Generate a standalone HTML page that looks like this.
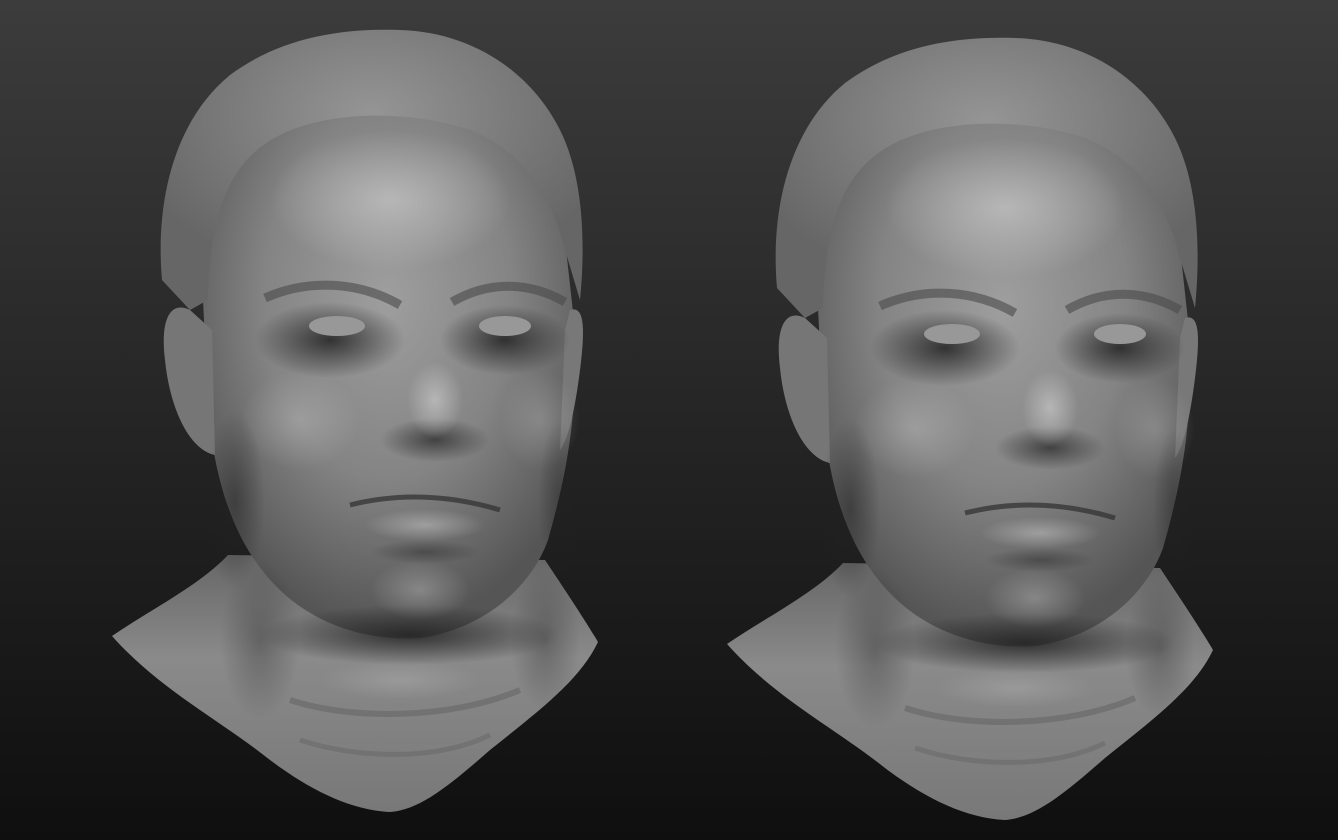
<!DOCTYPE html>
<html><head><meta charset="utf-8"><style>
html,body{margin:0;padding:0;width:1338px;height:840px;overflow:hidden;background:#1a1a1a}
svg{display:block}
</style></head><body>
<svg width="1338" height="840" viewBox="0 0 1338 840" xmlns="http://www.w3.org/2000/svg">
<defs>
<linearGradient id="bg" x1="0" y1="0" x2="0" y2="1">
<stop offset="0" stop-color="#3c3c3c"/><stop offset="0.5" stop-color="#252525"/><stop offset="1" stop-color="#0f0f0f"/>
</linearGradient>
<radialGradient id="skin" cx="0.5" cy="0.38" r="0.6">
<stop offset="0" stop-color="#9e9e9e"/><stop offset="0.55" stop-color="#848484"/><stop offset="1" stop-color="#555"/>
</radialGradient>
<radialGradient id="hair" cx="0.5" cy="0.3" r="0.6">
<stop offset="0" stop-color="#959595"/><stop offset="1" stop-color="#666"/>
</radialGradient>
<radialGradient id="dark" cx="0.5" cy="0.5" r="0.5">
<stop offset="0" stop-color="#222" stop-opacity="0.85"/><stop offset="1" stop-color="#222" stop-opacity="0"/>
</radialGradient>
<radialGradient id="light" cx="0.5" cy="0.5" r="0.5">
<stop offset="0" stop-color="#c0c0c0" stop-opacity="0.8"/><stop offset="1" stop-color="#c0c0c0" stop-opacity="0"/>
</radialGradient>
<linearGradient id="neck" x1="0" y1="0" x2="0" y2="1">
<stop offset="0" stop-color="#666"/><stop offset="0.4" stop-color="#8a8a8a"/><stop offset="1" stop-color="#787878"/>
</linearGradient>
<g id="head">
<path d="M112 636 C150 610 200 585 228 555 L545 560 C565 590 585 620 598 642 C580 680 540 710 490 750 C450 785 420 810 390 812 C350 810 310 790 270 760 C220 720 160 690 112 636 Z" fill="url(#neck)"/>
<path d="M200 240 C200 150 270 90 370 88 C480 88 555 150 565 240 L575 330 C578 420 565 480 548 540 C530 590 480 630 420 638 C360 642 300 620 262 570 C230 530 212 470 208 400 Z" fill="url(#skin)"/>
<path d="M190 310 C170 300 160 320 165 360 C170 410 190 450 215 455 L212 330 Z" fill="#767676"/>
<path d="M570 310 C585 305 585 330 580 370 C575 410 568 440 560 450 L565 330 Z" fill="#787878"/>
<path d="M162 280 C155 200 175 120 230 75 C280 38 340 28 400 30 C470 32 530 70 560 130 C585 180 585 250 580 300 L565 250 C550 190 520 150 470 130 C410 110 330 110 280 135 C230 160 210 210 208 300 L190 310 Z" fill="url(#hair)"/>
<!-- eye sockets -->
<ellipse cx="330" cy="340" rx="75" ry="38" fill="url(#dark)"/>
<ellipse cx="505" cy="340" rx="65" ry="35" fill="url(#dark)"/>
<ellipse cx="337" cy="326" rx="28" ry="10" fill="#989898"/>
<ellipse cx="505" cy="326" rx="26" ry="10" fill="#989898"/>
<path d="M265 298 C310 278 360 282 400 305" stroke="#4a4a4a" stroke-width="9" fill="none" opacity="0.6"/>
<path d="M452 302 C490 280 530 282 565 302" stroke="#4a4a4a" stroke-width="9" fill="none" opacity="0.6"/>
<ellipse cx="390" cy="200" rx="120" ry="70" fill="url(#light)"/>
<!-- nose -->
<ellipse cx="435" cy="440" rx="55" ry="22" fill="url(#dark)" opacity="0.8"/>
<ellipse cx="435" cy="400" rx="28" ry="38" fill="url(#light)"/>
<ellipse cx="300" cy="420" rx="60" ry="50" fill="url(#light)" opacity="0.5"/>
<ellipse cx="540" cy="420" rx="40" ry="50" fill="url(#light)" opacity="0.4"/>
<!-- jaw side shading -->
<ellipse cx="235" cy="500" rx="30" ry="90" fill="url(#dark)" opacity="0.6"/>
<ellipse cx="560" cy="500" rx="22" ry="80" fill="url(#dark)" opacity="0.5"/>
<!-- mouth -->
<path d="M350 505 C390 495 440 492 500 510" stroke="#333" stroke-width="5" fill="none" opacity="0.75"/>
<ellipse cx="425" cy="525" rx="60" ry="16" fill="url(#light)" opacity="0.7"/>
<ellipse cx="425" cy="552" rx="55" ry="12" fill="url(#dark)" opacity="0.5"/>
<ellipse cx="410" cy="635" rx="150" ry="30" fill="url(#dark)"/>
<ellipse cx="420" cy="590" rx="50" ry="30" fill="url(#light)" opacity="0.5"/>
<!-- neck -->
<ellipse cx="260" cy="640" rx="40" ry="80" fill="url(#dark)" opacity="0.4"/>
<ellipse cx="545" cy="640" rx="35" ry="70" fill="url(#dark)" opacity="0.4"/>
<path d="M290 700 C350 720 450 720 520 690" stroke="#606060" stroke-width="6" fill="none" opacity="0.5"/>
<path d="M300 740 C360 760 440 760 490 735" stroke="#606060" stroke-width="5" fill="none" opacity="0.4"/>
<ellipse cx="400" cy="680" rx="80" ry="20" fill="url(#light)" opacity="0.4"/>
</g>
</defs>
<rect width="1338" height="840" fill="url(#bg)"/>
<use href="#head"/>
<use href="#head" transform="translate(615,8)"/>
</svg>
</body></html>
